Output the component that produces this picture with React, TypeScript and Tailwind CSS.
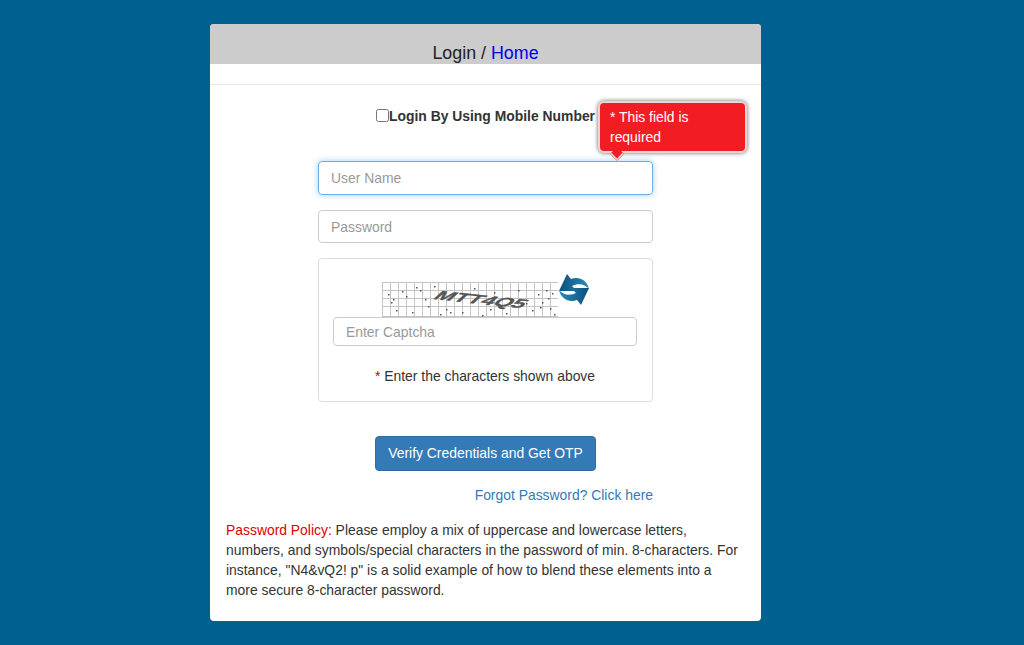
const dots = [
  [6, 12], [9, 20], [14, 28], [24, 14], [30, 30], [38, 8], [46, 24], [52, 4], [58, 32], [72, 12], [80, 30], [92, 6],
  [100, 33], [112, 10], [124, 31], [136, 8], [150, 28], [156, 12], [160, 20], [164, 8], [168, 26], [172, 32], [166, 16],
  [11, 17], [20, 9], [34, 5], [43, 17], [64, 27], [68, 30], [108, 27], [117, 22], [144, 21], [158, 25], [170, 11],
];

const Captcha = () => (
  <svg width="176" height="36" viewBox="0 0 176 36" className="block">
    <g stroke="#c4c4c4" strokeWidth="1">
      {[0, 1, 2, 3, 4, 5, 6, 7, 8, 9, 10, 11, 12, 13, 14, 15, 16, 17, 18, 19, 20, 21].map((i) => (
        <line key={i} x1={i * 8 + 0.5} y1="0" x2={i * 8 + 0.5} y2="36" />
      ))}
      {[0, 8, 16, 24, 34].map((y) => (
        <line key={y} x1="0" y1={y + 0.5} x2="176" y2={y + 0.5} />
      ))}
    </g>
    {dots.map(([x, y], i) => (
      <rect key={i} x={x} y={y} width="1.5" height="1.5" fill="#555" />
    ))}
    <text
      transform="translate(50 17) skewY(6) skewX(-45) scale(1.62 0.95)"
      fontFamily="Liberation Sans, sans-serif"
      fontSize="14"
      fontWeight="700"
      fill="#555"
      stroke="#555"
      strokeWidth="0.3"
    >
      MTT4Q5
    </text>
  </svg>
);

const RefreshIcon = () => (
  <svg width="32" height="32" viewBox="0 0 32 32" className="block -mt-px">
    <defs>
      <linearGradient id="swoosh" x1="0" y1="0" x2="1" y2="0">
        <stop offset="0" stopColor="#0b4f7c" />
        <stop offset="1" stopColor="#2a8cb8" />
      </linearGradient>
    </defs>
    <path d="M31 15 C29 6 21 2 13 5 L9 0 L1 17 L19 17 L14 12 C20 9 27 10 31 15 Z" fill="url(#swoosh)" />
    <path
      d="M31 15 C29 6 21 2 13 5 L9 0 L1 17 L19 17 L14 12 C20 9 27 10 31 15 Z"
      fill="url(#swoosh)"
      transform="rotate(180 16 15.5)"
    />
  </svg>
);

const App = () => {
  return (
    <div className="min-h-[645px] bg-[#006190] pt-6 pl-[210px] font-['Liberation_Sans',Arial,sans-serif] text-[13.9px] text-[#333]">
      <div className="w-[551px] h-[597px] bg-white rounded overflow-hidden">
        <div className="h-10 bg-[#cccccc] pt-[18px] text-center text-[17.85px] leading-[23px] text-[#222]">
          Login / <a className="text-[#0000ee]">Home</a>
        </div>
        <div className="h-[21px] border-b border-[#e7e7e7]" />

        <div className="w-[335px] mx-auto">
          <div className="relative h-[76px]">
            <label className="flex justify-center items-center pt-[21px] font-bold leading-5">
              <input type="checkbox" className="w-[13px] h-[13px] mb-0.5 appearance-none border border-[#767676] rounded-[2.5px] bg-white" />
              Login By Using Mobile Number
            </label>
            <div className="absolute left-[280px] top-[16px] w-[149px] h-[52px] bg-[#f21d22] rounded-md border-2 border-[#ecd4d4] shadow-[0_0_4px_#666] px-[10px] py-1 text-white leading-5">
              * This field is required
              <span className="absolute left-[12px] -bottom-[8px] w-2.5 h-2.5 rotate-45 bg-[#f21d22] border-r-2 border-b-2 border-[#dcc4c8]" />
            </div>
          </div>

          <input
            placeholder="User Name"
            className="block w-full h-[34px] px-3 rounded border border-[#66afe9] shadow-[0_0_6px_rgba(102,175,233,0.6)] placeholder:text-[#999] outline-none"
          />
          <input
            placeholder="Password"
            className="block w-full h-[33px] mt-[15px] px-3 rounded border border-[#ccc] placeholder:text-[#999] outline-none"
          />

          <div className="mt-[15px] h-[144px] rounded border border-[#ddd] pl-[14px] pr-[15px]">
            <div className="flex items-start pl-[49px] pt-[16px]">
              <div className="pt-[7px]">
                <Captcha />
              </div>
              <RefreshIcon />
            </div>
            <input
              placeholder="Enter Captcha"
              className="block w-full h-[29px] -mt-px px-3 rounded border border-[#ccc] placeholder:text-[#999] outline-none"
            />
            <p className="mt-5 text-center leading-5">
              <span className="text-[#c00000]">*</span> Enter the characters shown above
            </p>
          </div>

          <div className="flex justify-center mt-[34px]">
            <button className="w-[221px] h-[35px] rounded bg-[#337ab7] border border-[#2e6da4] text-white">
              Verify Credentials and Get OTP
            </button>
          </div>
          <div className="mt-[14px] text-right leading-5 text-[#337ab7]">Forgot Password? Click here</div>
        </div>

        <p className="mt-[15px] mx-4 leading-5">
          <span className="text-[#e00000]">Password Policy:</span> Please employ a mix of uppercase and lowercase letters,
          numbers, and symbols/special characters in the password of min. 8-characters. For instance, "N4&amp;vQ2! p" is a
          solid example of how to blend these elements into a more secure 8-character password.
        </p>
      </div>
    </div>
  );
};

export default App;
